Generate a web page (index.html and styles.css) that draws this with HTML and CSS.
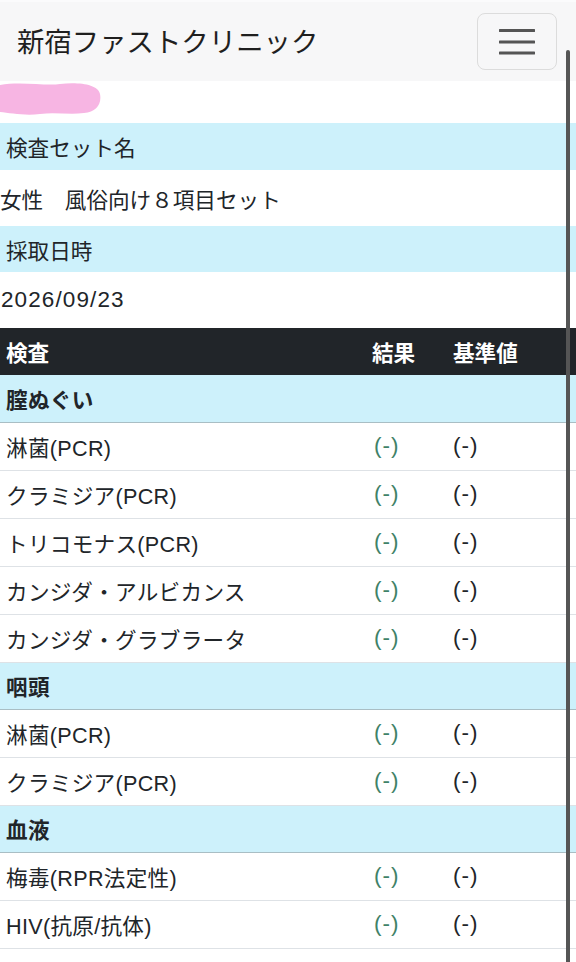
FILE: index.html
```html
<!DOCTYPE html>
<html lang="ja">
<head>
<meta charset="utf-8">
<link rel="stylesheet" href="styles.css">
</head>
<body>
<nav class="navbar">
  <span class="brand">新宿ファストクリニック</span>
  <button class="toggler" type="button" aria-label="menu">
    <svg width="36" height="30" viewBox="0 0 36 30">
      <path d="M1 4.5H35M1 16H35M1 27H35" stroke="#555" stroke-width="3" stroke-linecap="round"/>
    </svg>
  </button>
</nav>
<div class="name-row">
  <svg class="redact" width="102" height="34" viewBox="0 0 102 34">
    <path d="M0 3 C20 -1 45 4 60 2 C78 0 98 2 100 12 C102 22 96 30 84 31 C70 33 55 30 40 32 C25 34 10 31 0 30 Z" fill="#f7b5e3"/>
  </svg>
</div>
<div class="info">
  <div class="info-label">検査セット名</div>
  <div class="info-value">女性　風俗向け８項目セット</div>
  <div class="info-label short">採取日時</div>
  <div class="info-value date">2026/09/23</div>
</div>
<table class="results">
  <colgroup><col class="c1"><col class="c2"><col class="c3"></colgroup>
  <thead>
    <tr><th>検査</th><th>結果</th><th>基準値</th></tr>
  </thead>
  <tbody>
    <tr class="group"><td colspan="3">膣ぬぐい</td></tr>
    <tr><td>淋菌(PCR)</td><td class="res">(-)</td><td class="ref">(-)</td></tr>
    <tr><td>クラミジア(PCR)</td><td class="res">(-)</td><td class="ref">(-)</td></tr>
    <tr><td>トリコモナス(PCR)</td><td class="res">(-)</td><td class="ref">(-)</td></tr>
    <tr><td>カンジダ・アルビカンス</td><td class="res">(-)</td><td class="ref">(-)</td></tr>
    <tr><td>カンジダ・グラブラータ</td><td class="res">(-)</td><td class="ref">(-)</td></tr>
    <tr class="group"><td colspan="3">咽頭</td></tr>
    <tr><td>淋菌(PCR)</td><td class="res">(-)</td><td class="ref">(-)</td></tr>
    <tr><td>クラミジア(PCR)</td><td class="res">(-)</td><td class="ref">(-)</td></tr>
    <tr class="group"><td colspan="3">血液</td></tr>
    <tr><td>梅毒(RPR法定性)</td><td class="res">(-)</td><td class="ref">(-)</td></tr>
    <tr><td>HIV(抗原/抗体)</td><td class="res">(-)</td><td class="ref">(-)</td></tr>
  </tbody>
</table>
<div class="scroll-indicator"></div>
</body>
</html>
```

FILE: styles.css
```css
html, body {
  margin: 0;
  padding: 0;
  background: #ffffff;
}
body {
  font-family: "Liberation Sans", "Noto Sans CJK JP", sans-serif;
  font-size: 21.6px;
  color: #212529;
  position: relative;
  min-height: 962px;
  overflow: hidden;
}
.navbar {
  height: 81px;
  background: #f7f7f8;
  border-top: 2px solid #fbfbfc;
  box-sizing: border-box;
  display: flex;
  align-items: center;
  justify-content: space-between;
  padding: 0 19px 0 17px;
}
.brand {
  font-family: "Noto Sans CJK JP", sans-serif;
  font-size: 27.4px;
  color: #1f1f1f;
  line-height: 1;
  margin-top: -1px;
}
.toggler {
  width: 80px;
  height: 57px;
  margin-top: -1px;
  background: transparent;
  border: 1.5px solid #dcdcdc;
  border-radius: 8px;
  display: flex;
  align-items: center;
  justify-content: center;
  padding: 0;
}
.name-row {
  height: 42px;
  display: flex;
  align-items: flex-start;
}
.redact {
  display: block;
  margin-top: 1px;
}
.info {
  display: flex;
  flex-direction: column;
}
.info-label {
  height: 47px;
  background: #cdf1fb;
  display: flex;
  align-items: center;
  padding-left: 6px;
  font-family: "Noto Sans CJK JP", sans-serif;
}
.info-label.short {
  height: 46px;
}
.info-value {
  height: 56px;
  display: flex;
  align-items: center;
  padding-left: 0;
  font-family: "Noto Sans CJK JP", sans-serif;
}
.info-value.date {
  font-family: "Liberation Sans", sans-serif;
  font-size: 22.5px;
  letter-spacing: 1.1px;
  padding-left: 1px;
}
.results {
  width: 100%;
  border-collapse: collapse;
  table-layout: fixed;
}
.c1 { width: 366px; }
.c2 { width: 81px; }
.results th, .results td {
  padding: 0 0 0 6px;
  text-align: left;
  white-space: nowrap;
  box-sizing: border-box;
}
.results thead tr {
  height: 47px;
  background: #212529;
  color: #ffffff;
}
.results th {
  font-weight: bold;
  font-family: "Noto Sans CJK JP", sans-serif;
}
.results tbody tr {
  height: 48px;
  border-bottom: 1px solid #dee2e6;
}
.results tbody tr.group {
  height: 47px;
  background: #cdf1fb;
  border-bottom: 1px solid #a9bec4;
}
.results tr.group td {
  font-weight: bold;
  font-family: "Noto Sans CJK JP", sans-serif;
}
.results td {
  letter-spacing: 0.3px;
}
.results td.res {
  color: #3f8268;
  padding-left: 8px;
  font-size: 22.5px;
  letter-spacing: 1px;
}
.results td.ref {
  font-size: 22.5px;
  letter-spacing: 1px;
}
.scroll-indicator {
  position: absolute;
  left: 566px;
  top: 50px;
  width: 4px;
  height: 920px;
  border-radius: 2px;
  background: #555555;
}
```
